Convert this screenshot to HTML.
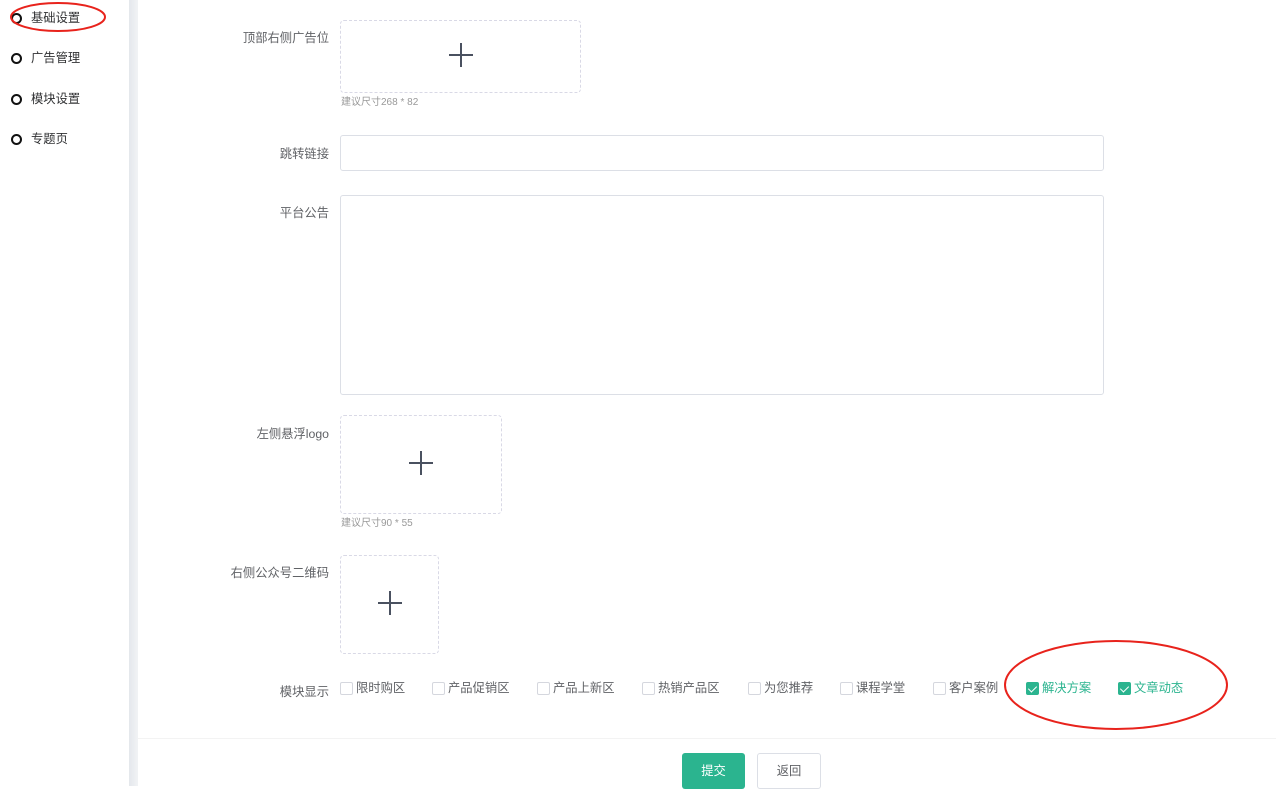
<!DOCTYPE html>
<html><head><meta charset="utf-8"><style>
*{box-sizing:border-box;margin:0;padding:0}
body{width:1276px;height:786px;overflow:hidden;background:#fff;font-family:"Liberation Sans","Noto Sans CJK SC",sans-serif;position:relative;color:#606266}
.side{position:absolute;left:0;top:0;width:129px;height:786px;background:#fff;border-top-right-radius:14px}
.strip{position:absolute;left:129px;top:0;width:9px;height:786px;background:linear-gradient(90deg,#e4e7ec,#f1f3f5)}
.nav{position:absolute;left:11px;font-size:12.3px;line-height:14px;color:#303133;display:flex;align-items:center}
.nav i{width:11px;height:11px;border:2px solid #111;border-radius:50%;margin-right:9px;display:inline-block}
.lbl{position:absolute;right:947px;font-size:12.3px;line-height:14px;color:#606266;text-align:right;white-space:nowrap}
.up{position:absolute;border:1px dashed #d9d9e6;border-radius:4px}
.up::before,.up::after{content:"";position:absolute;left:50%;top:50%;background:#4a5160}
.up::before{width:24px;height:2px;margin:-3px 0 0 -12px}
.up::after{width:2px;height:24px;margin:-14px 0 0 -1px}
.hint{position:absolute;left:341px;font-size:10px;line-height:12px;color:#999}
.box{position:absolute;left:340px;width:764px;border:1px solid #dcdfe6;border-radius:3px}
.cb{position:absolute;top:681px;font-size:12.3px;line-height:14px;display:flex;align-items:center;color:#606266;white-space:nowrap}
.cb i{width:13px;height:13px;border:1px solid #d5d7de;border-radius:2px;margin-right:3px;display:inline-block;position:relative}
.cb.on{color:#2bb48f}
.cb.on i{background:#2bb48f;border-color:#2bb48f}
.cb.on i::after{content:"";position:absolute;left:3px;top:1px;width:4px;height:7px;border:solid #fff;border-width:0 1.5px 1.5px 0;transform:rotate(45deg)}
.foot{position:absolute;left:138px;top:738px;width:1138px;height:48px;background:#fff;border-top:1px solid #f3f3f3}
.btn{position:absolute;top:753px;height:36px;font-size:12.3px;border-radius:3px;display:flex;align-items:center;justify-content:center;padding-bottom:3px}
</style></head><body>
<div class="side"></div><div class="strip"></div>
<div class="nav" style="top:11px"><i></i>基础设置</div>
<div class="nav" style="top:51px"><i></i>广告管理</div>
<div class="nav" style="top:92px"><i></i>模块设置</div>
<div class="nav" style="top:132px"><i></i>专题页</div>
<svg style="position:absolute;left:10px;top:1px" width="100" height="32"><ellipse cx="48" cy="16" rx="47" ry="14" fill="none" stroke="#e8231c" stroke-width="2"/></svg>

<div class="lbl" style="top:31px">顶部右侧广告位</div>
<div class="up" style="left:340px;top:20px;width:241px;height:73px"></div>
<div class="hint" style="top:97px">建议尺寸268 * 82</div>

<div class="lbl" style="top:147px">跳转链接</div>
<div class="box" style="top:135px;height:36px"></div>

<div class="lbl" style="top:206px">平台公告</div>
<div class="box" style="top:195px;height:200px"></div>

<div class="lbl" style="top:427px">左侧悬浮logo</div>
<div class="up" style="left:340px;top:415px;width:162px;height:99px"></div>
<div class="hint" style="top:518px">建议尺寸90 * 55</div>

<div class="lbl" style="top:566px">右侧公众号二维码</div>
<div class="up" style="left:340px;top:555px;width:99px;height:99px"></div>

<div class="lbl" style="top:685px">模块显示</div>
<div class="cb" style="left:340px"><i></i>限时购区</div>
<div class="cb" style="left:432px"><i></i>产品促销区</div>
<div class="cb" style="left:537px"><i></i>产品上新区</div>
<div class="cb" style="left:642px"><i></i>热销产品区</div>
<div class="cb" style="left:748px"><i></i>为您推荐</div>
<div class="cb" style="left:840px"><i></i>课程学堂</div>
<div class="cb" style="left:933px"><i></i>客户案例</div>
<div class="cb on" style="left:1026px"><i></i>解决方案</div>
<div class="cb on" style="left:1118px"><i></i>文章动态</div>
<svg style="position:absolute;left:1003px;top:639px" width="228" height="92"><ellipse cx="113" cy="46" rx="111" ry="44" fill="none" stroke="#e8231c" stroke-width="2"/></svg>

<div class="foot"></div>
<div class="btn" style="left:682px;width:63px;background:#2bb48f;color:#fff">提交</div>
<div class="btn" style="left:757px;width:64px;border:1px solid #dcdfe6;color:#606266;background:#fff">返回</div>
</body></html>
